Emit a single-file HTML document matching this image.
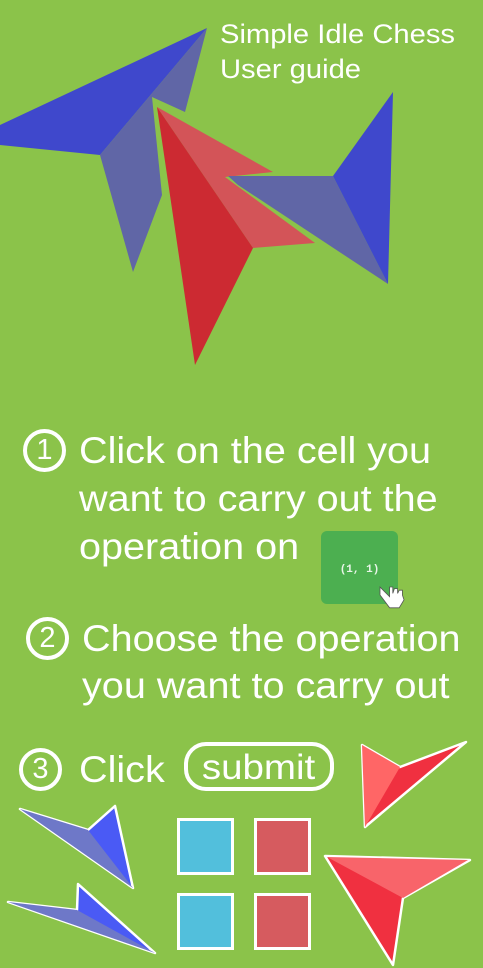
<!DOCTYPE html>
<html><head><meta charset="utf-8"><style>
html,body{margin:0;padding:0}
body{width:483px;height:968px;background:#8bc34a;position:relative;overflow:hidden;font-family:"Liberation Sans",sans-serif;color:#fff}
.t{position:absolute;white-space:nowrap;line-height:1;transform-origin:0 0}
.b{font-size:37px;transform:scaleX(1.07)}
svg{position:absolute;left:0;top:0}
.c{position:absolute;border:4px solid #fff;border-radius:50%;box-sizing:border-box;width:43px;height:43px;font-size:29px;text-align:center;line-height:35px}
</style></head><body>
<svg width="483" height="968" viewBox="0 0 483 968">
<g>
<polygon points="207,28 0,125 0,145 100,155" fill="#3f48cc"/>
<polygon points="207,28 185,112 152,97 162,195 133,272 100,155" fill="#6066a6"/>
<polygon points="157,107 273,172 225,177 315,243 253,248" fill="#d35458"/>
<polygon points="157,107 253,248 195,365" fill="#cc2a32"/>
<polygon points="228,176 333,176 388,284 238,185" fill="#6066a6"/>
<polygon points="333,176 393,92 388,284" fill="#3f48cc"/>
</g>
<g stroke="#fff" stroke-width="2.5" stroke-linejoin="round">
<polygon points="20,809 88,830 115,806 133,888" fill="#4a5af5"/>
<polygon points="8,902 77,910 78,884 155,953" fill="#4a5af5"/>
<polygon points="362,745 400,767 466,742 365,827" fill="#f03040"/>
<polygon points="325,856 470,860 403,898 393,965" fill="#f03040"/>
</g>
<polygon points="20,809 88,830 133,888" fill="#6e78c8"/>
<polygon points="8,902 77,910 155,953" fill="#6e78c8"/>
<polygon points="362,745 400,767 365,827" fill="#ff6666"/>
<polygon points="327,857 468,860 403,898" fill="#f8646a"/>
<g stroke="#fff" stroke-width="3">
<rect x="178.5" y="819.5" width="54" height="54" fill="#52bfdc"/>
<rect x="255.5" y="819.5" width="54" height="54" fill="#d65b5f"/>
<rect x="178.5" y="894.5" width="54" height="54" fill="#52bfdc"/>
<rect x="255.5" y="894.5" width="54" height="54" fill="#d65b5f"/>
</g>
<rect x="321" y="531" width="77" height="73" rx="6" fill="#4caf50"/>
<text x="359.5" y="572" font-family="Liberation Mono,monospace" font-size="11" font-weight="bold" fill="#e8f5e8" text-anchor="middle">(1, 1)</text>
<g transform="translate(380,587) scale(1.6)">
<path d="M0,0 l6,6 l0,-6 l2,0 l0,4 l1,-3 l2,0 l0,3 l1,-2 l2,0 l0,3 l1,3 l-3,5 l-6,0 l-6,-8 z" fill="#fff" stroke="#555" stroke-width="0.5"/>
</g>
</svg>
<div class="t" style="left:220px;top:21px;font-size:27px;transform:scaleX(1.08)">Simple Idle Chess</div>
<div class="t" style="left:220px;top:56px;font-size:27px;transform:scaleX(1.08)">User guide</div>

<div class="c" style="left:23px;top:429px">1</div>
<div class="t b" style="left:79px;top:432px">Click on the cell you</div>
<div class="t b" style="left:79px;top:480px">want to carry out the</div>
<div class="t b" style="left:79px;top:528px">operation on</div>

<div class="c" style="left:26px;top:617px">2</div>
<div class="t b" style="left:82px;top:620px">Choose the operation</div>
<div class="t b" style="left:82px;top:667px">you want to carry out</div>

<div class="c" style="left:19px;top:748px">3</div>
<div class="t b" style="left:79px;top:751px">Click</div>
<div style="position:absolute;left:184px;top:742px;width:150px;height:49px;box-sizing:border-box;border:4px solid #fff;border-radius:22px;text-align:center;font-size:35px;line-height:43px"><span style="display:inline-block;transform:scaleX(1.1)">submit</span></div>
</body></html>
